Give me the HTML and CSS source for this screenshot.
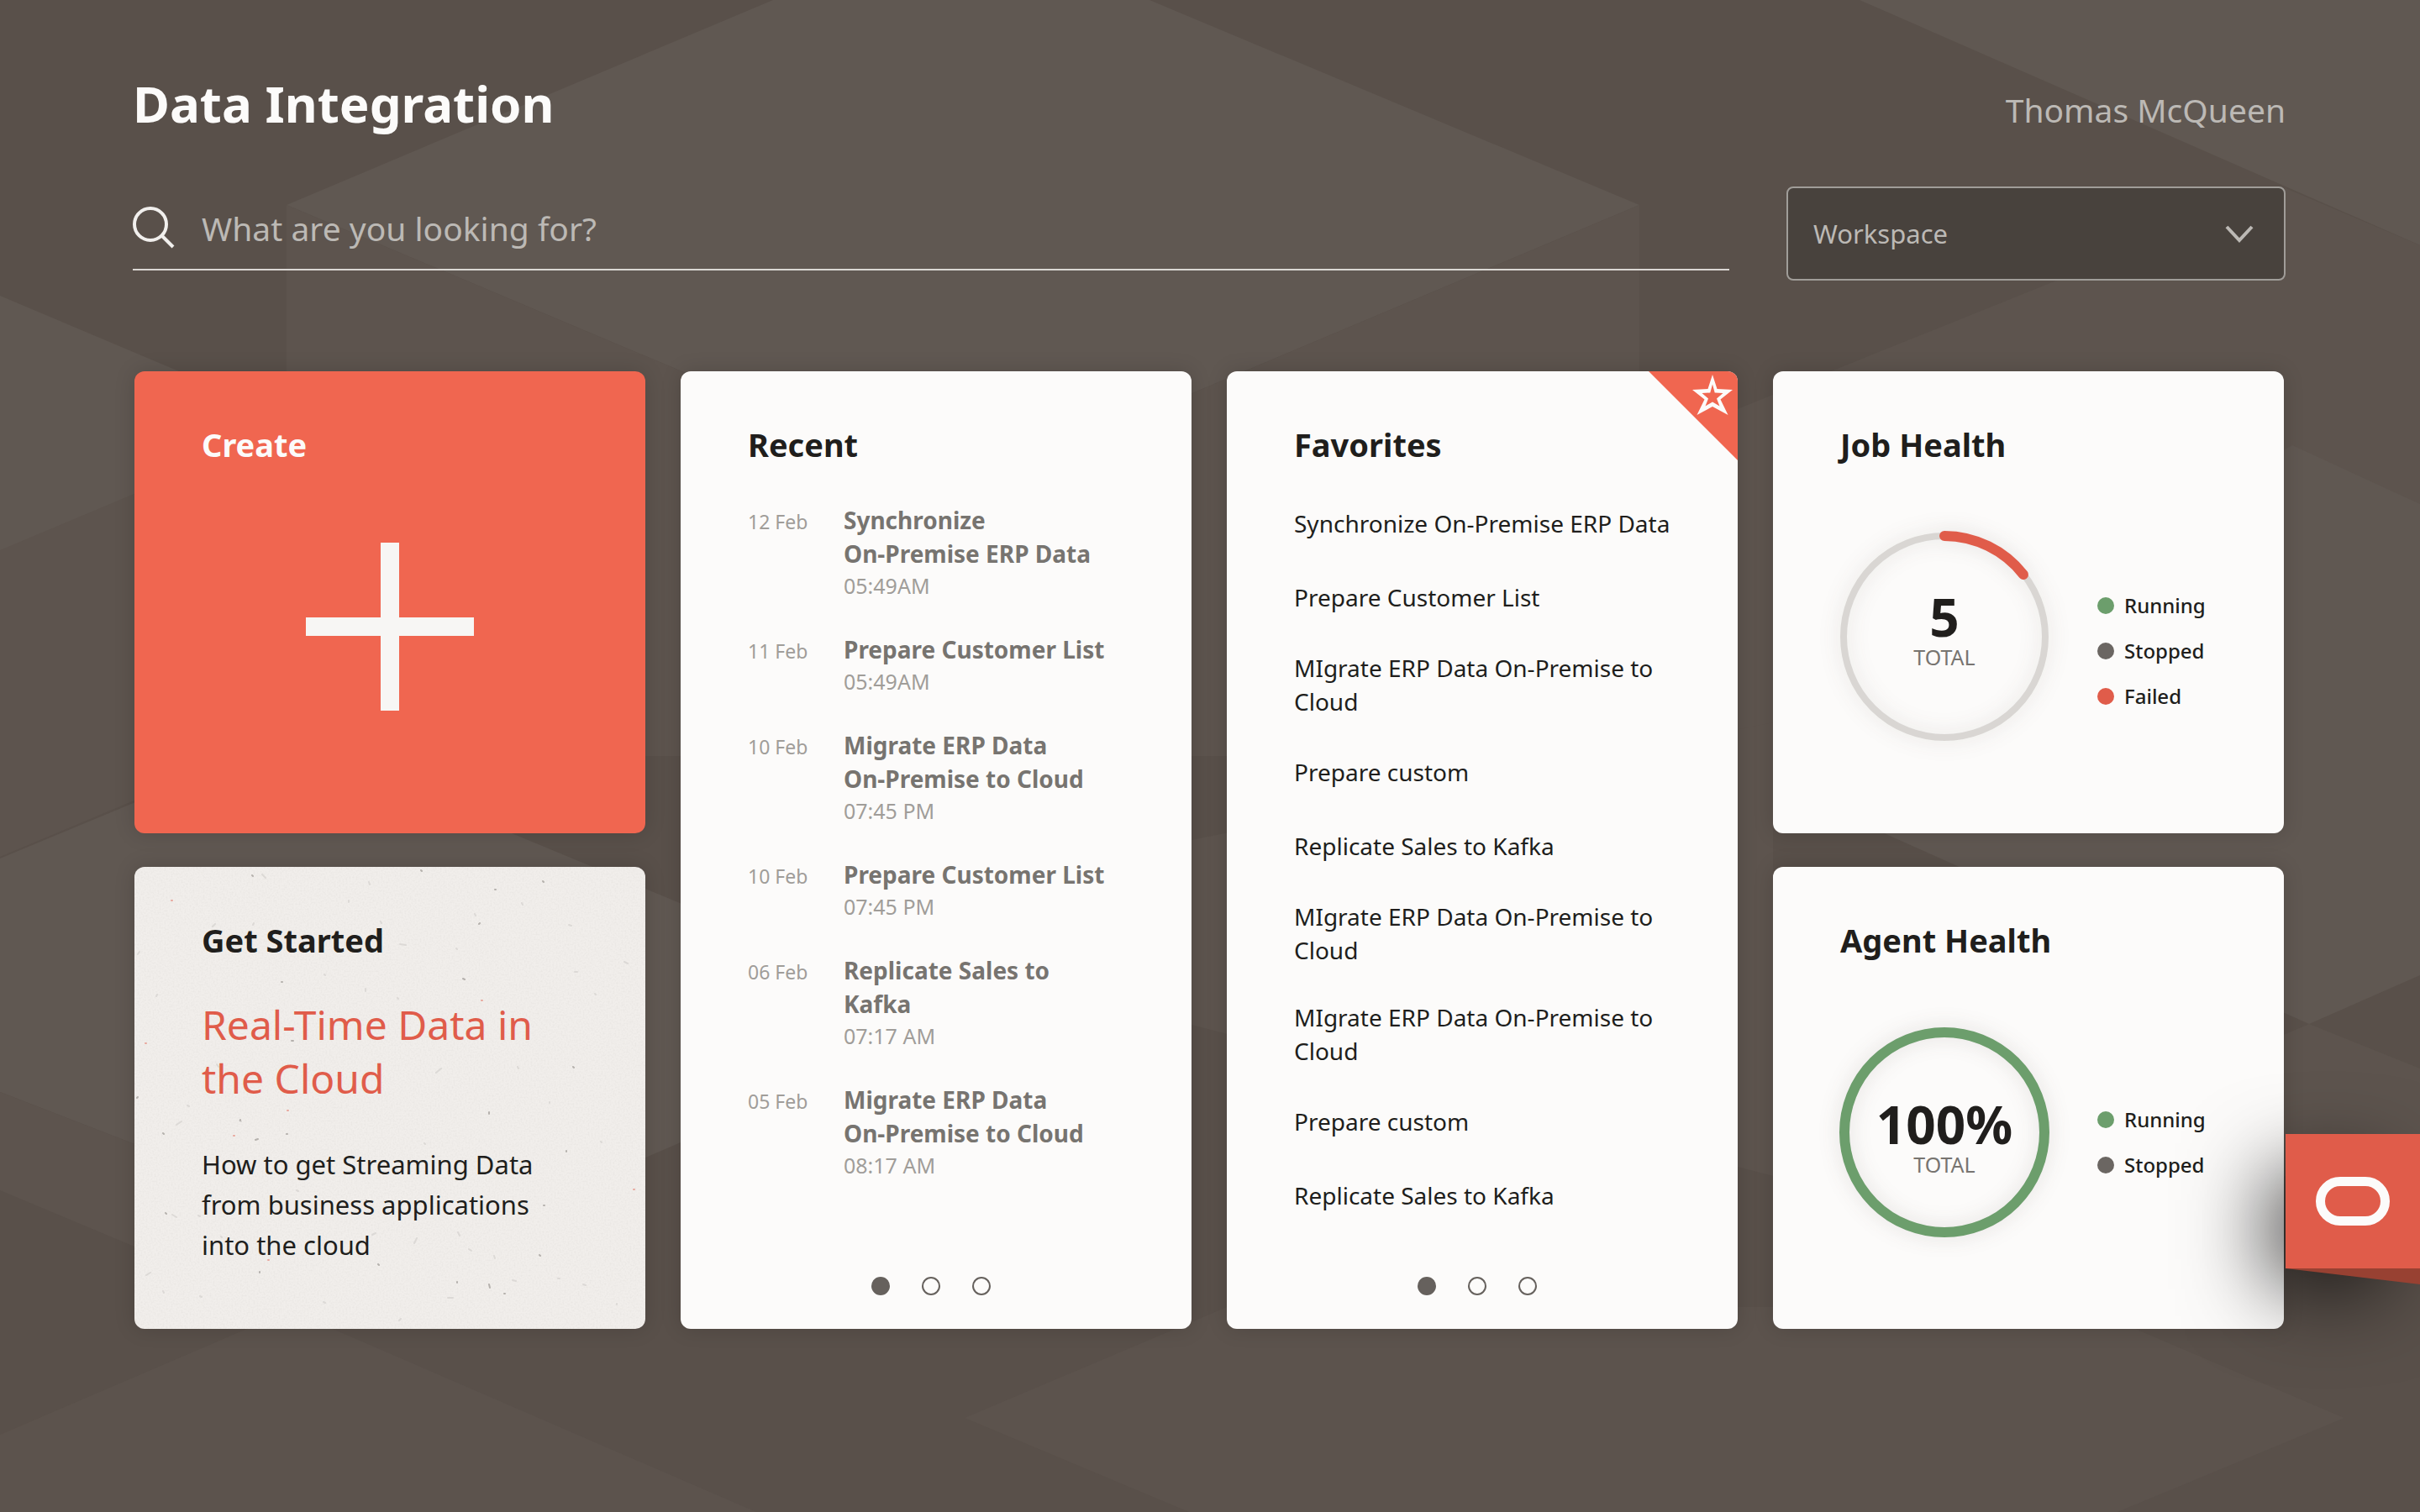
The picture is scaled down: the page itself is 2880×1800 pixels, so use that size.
FILE: index.html
```html
<!DOCTYPE html>
<html lang="en">
<head>
    <meta charset="UTF-8">
    <meta name="viewport" content="width=device-width, initial-scale=1.0">
    <title>Data Integration</title>

    <link rel="stylesheet" href="styles.css">
</head>
<body>

<svg class="backdrop" viewBox="0 0 2880 1800" preserveAspectRatio="xMidYMin slice" aria-hidden="true">
    <path class="facet-light" d="M341 244 920 0H1368L1951 244 1146 583Z"/>
    <path class="facet-mid" d="M341 244 1146 583 1951 244V900H341Z"/>
    <path class="facet-light" d="M2213 0H2880V292Z"/>
    <path class="facet-mid" d="M2720 224 2880 292V900H2060V490Z"/>
    <path class="facet-light" d="M0 352 239 453 500 560V450L0 660Z"/>
    <path class="facet-mid" d="M0 655 500 445V810L0 1020Z"/>
    <path class="facet-light" d="M0 1022 341 880 609 992 1146 1215 500 1494 0 1300Z"/>
    <path class="facet-mid" d="M0 1300 500 1494 341 1560 0 1417Z"/>
    <path class="facet-light" d="M2060 910 2728 530 2880 600V1161L2748 1219Z"/>
    <path class="facet-mid" d="M2748 1219 2880 1272V1400H2600V1282Z"/>
    <path class="facet-mid" d="M1418 1000 2110 860V1400L1418 1220Z"/>
    <path class="facet-low" d="M1148 1688 1460 1556H2480L2790 1688 2520 1800H1415Z"/>
    <path class="facet-low" d="M0 1708 345 1560 900 1800H0Z"/>
</svg>

<div class="page">
    <header class="header">
        <h1>Data Integration</h1>
        <a class="user" href="#">Thomas McQueen</a>
    </header>

    <div class="toolbar">
        <form class="search">
            <svg class="search-icon" viewBox="0 0 50 50" aria-hidden="true">
                <circle cx="21" cy="21" r="19"/>
                <path d="M34.500 34.500 48 48"/>
            </svg>
            <input type="text" aria-label="Search" placeholder="What are you looking for?">
        </form>
        <div class="workspace">
            <select aria-label="Workspace">
                <option>Workspace</option>
            </select>
            <svg class="chevron" viewBox="0 0 34 22" aria-hidden="true"><path d="M2 2 17 18 32 2"/></svg>
        </div>
    </div>

    <main class="cards">
        <button class="card create" type="button">
            <span class="card-title">Create</span>
            <svg class="plus" viewBox="0 0 200 200" aria-hidden="true"><path d="M89 0h22v89h89v22h-89v89H89v-89H0V89h89z"/></svg>
        </button>

        <section class="card tall">
            <h2 class="card-title">Recent</h2>
            <ul class="recent">
                <li>
                    <span class="date">12 Feb</span>
                    <div>
                        <h3>Synchronize<br>On-Premise ERP Data</h3>
                        <p>05:49AM</p>
                    </div>
                </li>
                <li>
                    <span class="date">11 Feb</span>
                    <div>
                        <h3>Prepare Customer List</h3>
                        <p>05:49AM</p>
                    </div>
                </li>
                <li>
                    <span class="date">10 Feb</span>
                    <div>
                        <h3>Migrate ERP Data<br>On-Premise to Cloud</h3>
                        <p>07:45 PM</p>
                    </div>
                </li>
                <li>
                    <span class="date">10 Feb</span>
                    <div>
                        <h3>Prepare Customer List</h3>
                        <p>07:45 PM</p>
                    </div>
                </li>
                <li>
                    <span class="date">06 Feb</span>
                    <div>
                        <h3>Replicate Sales to<br>Kafka</h3>
                        <p>07:17 AM</p>
                    </div>
                </li>
                <li>
                    <span class="date">05 Feb</span>
                    <div>
                        <h3>Migrate ERP Data<br>On-Premise to Cloud</h3>
                        <p>08:17 AM</p>
                    </div>
                </li>
            </ul>
            <div class="pager">
                <button class="active" type="button" aria-label="Page 1"></button>
                <button type="button" aria-label="Page 2"></button>
                <button type="button" aria-label="Page 3"></button>
            </div>
        </section>

        <section class="card tall">
            <div class="ribbon">
                <svg viewBox="0 0 48 48" aria-hidden="true">
                    <path fill-rule="evenodd" d="M24 0 29.500 17 48 18 33.500 29.500 42.500 48 24 38 5.500 48 14.500 29.500 0 18 18.500 17Z M24 11.500 21.300 21.500 11.500 22 19 28.500 15.500 37.500 24 32.500 32.500 37.500 29 28.500 36.500 22 26.700 21.500Z"/>
                </svg>
            </div>
            <h2 class="card-title">Favorites</h2>
            <ul class="favorites">
                <li>Synchronize On-Premise ERP Data</li>
                <li>Prepare Customer List</li>
                <li>MIgrate ERP Data On-Premise to Cloud</li>
                <li>Prepare custom</li>
                <li>Replicate Sales to Kafka</li>
                <li>MIgrate ERP Data On-Premise to Cloud</li>
                <li>MIgrate ERP Data On-Premise to Cloud</li>
                <li>Prepare custom</li>
                <li>Replicate Sales to Kafka</li>
            </ul>
            <div class="pager">
                <button class="active" type="button" aria-label="Page 1"></button>
                <button type="button" aria-label="Page 2"></button>
                <button type="button" aria-label="Page 3"></button>
            </div>
        </section>

        <section class="card">
            <h2 class="card-title">Job Health</h2>
            <div class="health job">
                <div class="gauge">
                    <svg viewBox="0 0 248 248" aria-hidden="true">
                        <circle class="track" cx="124" cy="124" r="120"/>
                        <path class="failed-arc" d="M124 4A120 120 0 0 1 218 50"/>
                    </svg>
                    <div class="gauge-text">
                        <strong>5</strong>
                        <span>TOTAL</span>
                    </div>
                </div>
                <ul class="legend">
                    <li class="running">Running</li>
                    <li class="stopped">Stopped</li>
                    <li class="failed">Failed</li>
                </ul>
            </div>
        </section>

        <section class="card get-started">
            <svg class="paper" viewBox="0 0 608 550" preserveAspectRatio="none" aria-hidden="true">
                <filter id="grain">
                    <feTurbulence type="fractalNoise" baseFrequency="0.5" numOctaves="2" seed="4"/>
                    <feColorMatrix values="0 0 0 0 0.5  0 0 0 0 0.48  0 0 0 0 0.45  0.3 0 0 0 -0.12"/>
                </filter>
                <rect width="608" height="550" filter="url(#grain)"/>
                <path class="fleck-soft" d="M152 9l4 4M279 18l1 3M96 68l-3 3M293 65l1 2M316 92l7 1M517 69l3 1M583 113l4 2M461 43l1 2M405 56l1 2M275 145l0 3M359 245l6-5M313 156l1 1M50 307l6-4M4 104l2-3M27 152l-1 2M142 67l-1 2M226 128l1 1M255 40l0 2M383 97l1 1M548 151l1 1M524 125l3 0M456 238l1 2M494 280l0 1M63 284l2 1M98 235l2 3M125 302l2 1M193 385l2 1M207 366l1 2M345 329l1 1M336 442l-3 6M385 435l2 4M283 438l4-2M45 414l5 3M76 415l2 1M103 440l1 1M14 486l5-3M225 518l2 1M315 540l2-2M373 513l6 0M450 492l4 1M504 490l2 0M534 497l3 1M470 365l2 0M428 463l1 3M574 520l0 1M398 455l3 2M163 403l1 2M78 511l2 1M34 505l1 2M555 327l1 1"/>
                <path class="fleck" d="M140 10l1 1M341 4l1 1M486 17l1 1M429 27l1 0M411 67l-1 1M391 133l2 1M522 238l1 1M422 292l0 2M144 325l3-1M34 317l1 1M4 274l-1 1M187 207l2 0M276 397l0 1M487 403l1 0M482 462l1 1M290 473l1 1M384 494l0 1M422 497l1 4M149 482l0 1M181 318l1 0M514 338l0 1M126 301l0 1M175 137l1 0M440 508l1 0M37 412l1 1"/>
                <path class="fleck-red" d="M44 40l1 0M413 159l1 0M13 210l1 0M159 468l1 0M118 320l1 0M594 384l1 0M182 290l1 0"/>
            </svg>
            <h2 class="card-title">Get Started</h2>
            <a class="headline" href="#">Real-Time Data in the Cloud</a>
            <p>How to get Streaming Data from business applications into the cloud</p>
        </section>

        <section class="card">
            <h2 class="card-title">Agent Health</h2>
            <div class="health agent">
                <div class="gauge">
                    <svg viewBox="0 0 248 248" aria-hidden="true">
                        <circle class="running-arc" cx="124" cy="124" r="119"/>
                    </svg>
                    <div class="gauge-text">
                        <strong>100%</strong>
                        <span>TOTAL</span>
                    </div>
                </div>
                <ul class="legend">
                    <li class="running">Running</li>
                    <li class="stopped">Stopped</li>
                </ul>
            </div>
        </section>
    </main>
</div>

<button class="brand-tab" type="button" aria-label="Open assistant">
    <svg class="brand-logo" viewBox="0 0 88 58" aria-hidden="true"><rect x="5.500" y="5.500" width="77" height="47" rx="23.500"/></svg>
    <svg class="brand-fold" viewBox="0 0 160 20" preserveAspectRatio="none" aria-hidden="true"><path d="M0 0H160V19Z"/></svg>
</button>

</body>
</html>
```
FILE: styles.css
```css
* {
    box-sizing: border-box;
}

body {
    font-family: 'Noto Sans', sans-serif;
    margin: 0;
    min-height: 100vh;
    position: relative;
    overflow-x: hidden;
    background-color: #59504a;
    color: #201e1c;
}

h1, h2, h3, p, ul {
    margin: 0;
    padding: 0;
}

ul {
    list-style: none;
}

button, input, select {
    font-family: inherit;
}

.backdrop {
    position: absolute;
    top: 0;
    left: 0;
    width: 100%;
    height: 100%;
}

.facet-light {
    fill: #605852;
}

.facet-mid {
    fill: #5d544e;
}

.facet-low {
    fill: #5c534d;
}

.page {
    position: relative;
    padding: 80px 160px 80px 158px;
}

/* header */
.header {
    display: flex;
    justify-content: space-between;
    align-items: baseline;
    margin-bottom: 56px;
}

h1 {
    font-size: 60px;
    line-height: 86px;
    color: #fcfbfa;
}

.user {
    font-size: 39px;
    color: #bcb9b5;
    text-decoration: none;
}

.toolbar {
    display: flex;
    align-items: flex-start;
    gap: 68px;
    margin-bottom: 108px;
}

.search {
    flex: 1;
    display: flex;
    align-items: center;
    gap: 32px;
    height: 100px;
    border-bottom: 2px solid #dad7d3;
}

.search-icon {
    width: 50px;
    height: 50px;
    fill: none;
    stroke: #f1efed;
    stroke-width: 4;
}

.search input {
    flex: 1;
    padding: 0;
    border: none;
    outline: none;
    background: transparent;
    font-size: 39px;
    color: #fcfbfa;
}

.search input::placeholder {
    color: #bcb9b5;
    opacity: 1;
}

.workspace {
    position: relative;
    width: 594px;
}

.workspace select {
    width: 100%;
    height: 112px;
    padding: 0 30px;
    border: 2px solid #a09d99;
    border-radius: 8px;
    background-color: #48423d;
    color: #bcb9b5;
    font-size: 31px;
    appearance: none;
}

.chevron {
    position: absolute;
    top: 46px;
    right: 38px;
    width: 34px;
    height: 22px;
    fill: none;
    stroke: #bcb9b5;
    stroke-width: 4;
    pointer-events: none;
}

/* cards */
.cards {
    display: grid;
    grid-template-columns: repeat(4, 1fr);
    grid-auto-rows: minmax(550px, auto);
    gap: 40px 42px;
    padding: 0 2px;
}

.card {
    position: relative;
    display: flex;
    flex-direction: column;
    padding: 60px 64px 40px 80px;
    border-radius: 12px;
    background-color: #fcfbfa;
    box-shadow: 0 0 24px rgba(0, 0, 0, 0.15);
    overflow: hidden;
}

.tall {
    grid-row: span 2;
}

.card-title {
    font-size: 38px;
    font-weight: bold;
    line-height: 54px;
}

.create {
    align-items: flex-start;
    border: none;
    background-color: #f06650;
    color: #fcfbfa;
    cursor: pointer;
}

.plus {
    width: 200px;
    height: 200px;
    margin-top: 90px;
    margin-left: 124px;
    fill: #f7f6f4;
}

/* recent */
.recent {
    display: flex;
    flex-direction: column;
    gap: 38px;
    margin-top: 43px;
}

.recent li {
    display: flex;
    align-items: baseline;
}

.date {
    flex: 0 0 114px;
    font-size: 23px;
    color: #a09d99;
}

.recent h3 {
    font-size: 28px;
    line-height: 40px;
    color: #777470;
}

.recent p {
    font-size: 25px;
    line-height: 36px;
    color: #a09d99;
}

.favorites {
    display: flex;
    flex-direction: column;
    gap: 40px;
    margin-top: 43px;
}

.favorites li {
    display: flex;
    align-items: center;
    min-height: 48px;
    font-size: 28px;
    line-height: 40px;
}

.ribbon {
    position: absolute;
    top: 0;
    right: 0;
    width: 106px;
    height: 106px;
    background-color: #f06650;
    clip-path: polygon(0 0, 100% 0, 100% 100%);
}

.ribbon svg {
    display: block;
    width: 48px;
    height: 48px;
    margin: 4px 6px 0 auto;
    fill: #fcfbfa;
}

.pager {
    display: flex;
    gap: 38px;
    margin-top: auto;
    padding-left: 147px;
}

.pager button {
    width: 22px;
    height: 22px;
    padding: 0;
    border: 2px solid #66615d;
    border-radius: 50%;
    background: transparent;
    cursor: pointer;
}

.pager .active {
    background-color: #66615d;
}

/* get started */
.get-started {
    background-color: #f1eeeb;
}

.get-started > * {
    position: relative;
}

.get-started .paper {
    position: absolute;
    top: 0;
    left: 0;
    width: 100%;
    height: 100%;
    fill: none;
    stroke-width: 2;
    stroke-linecap: round;
}

.fleck-soft {
    stroke: #dcd9d6;
}

.fleck {
    stroke: #b5b1ad;
}

.fleck-red {
    stroke: #e8a79d;
}

.headline {
    margin-top: 42px;
    font-size: 48px;
    line-height: 64px;
    color: #e05c4a;
    text-decoration: none;
}

.get-started p {
    margin-top: 46px;
    padding-right: 40px;
    font-size: 31px;
    line-height: 48px;
}

/* health */
.health {
    display: flex;
    align-items: flex-start;
    gap: 58px;
    margin-top: 78px;
}

.gauge {
    position: relative;
    flex: 0 0 248px;
    height: 248px;
}

.gauge svg {
    display: block;
    overflow: visible;
    fill: none;
    filter: drop-shadow(0 0 12px rgba(60, 50, 40, 0.15));
}

.track {
    stroke: #d9d6d3;
    stroke-width: 8;
}

.failed-arc {
    stroke: #e05c4a;
    stroke-width: 12;
    stroke-linecap: round;
}

.running-arc {
    stroke: #6c9e6c;
    stroke-width: 12;
}

.gauge-text {
    position: absolute;
    inset: 0;
    display: flex;
    flex-direction: column;
    align-items: center;
    justify-content: center;
}

.job .gauge-text {
    padding-bottom: 12px;
}

.agent .gauge-text {
    padding-top: 16px;
}

.gauge-text strong {
    font-size: 62px;
    line-height: 60px;
}

.gauge-text span {
    font-size: 25px;
    line-height: 36px;
    color: #777470;
}

.legend {
    margin-top: 60px;
}

.agent .legend {
    margin-top: 82px;
}

.legend li {
    display: flex;
    align-items: center;
    gap: 12px;
    font-size: 24px;
    font-weight: 500;
    line-height: 54px;
}

.legend li::before {
    content: '';
    width: 20px;
    height: 20px;
    border-radius: 50%;
    background-color: #6c9e6c;
}

.legend .stopped::before {
    background-color: #6b6662;
}

.legend .failed::before {
    background-color: #e05c4a;
}

/* brand tab on the right edge */
.brand-tab {
    position: absolute;
    top: 1350px;
    right: 0;
    display: flex;
    align-items: center;
    justify-content: center;
    width: 160px;
    height: 160px;
    padding: 0;
    border: none;
    background-color: #e05c4a;
    box-shadow: -30px 34px 100px -10px rgba(0, 0, 0, 0.7);
    cursor: pointer;
}

.brand-logo {
    width: 88px;
    height: 58px;
    fill: none;
    stroke: #fcfbfa;
    stroke-width: 11;
}

.brand-fold {
    position: absolute;
    top: 100%;
    left: 0;
    width: 100%;
    height: 20px;
    fill: #984132;
}
```
